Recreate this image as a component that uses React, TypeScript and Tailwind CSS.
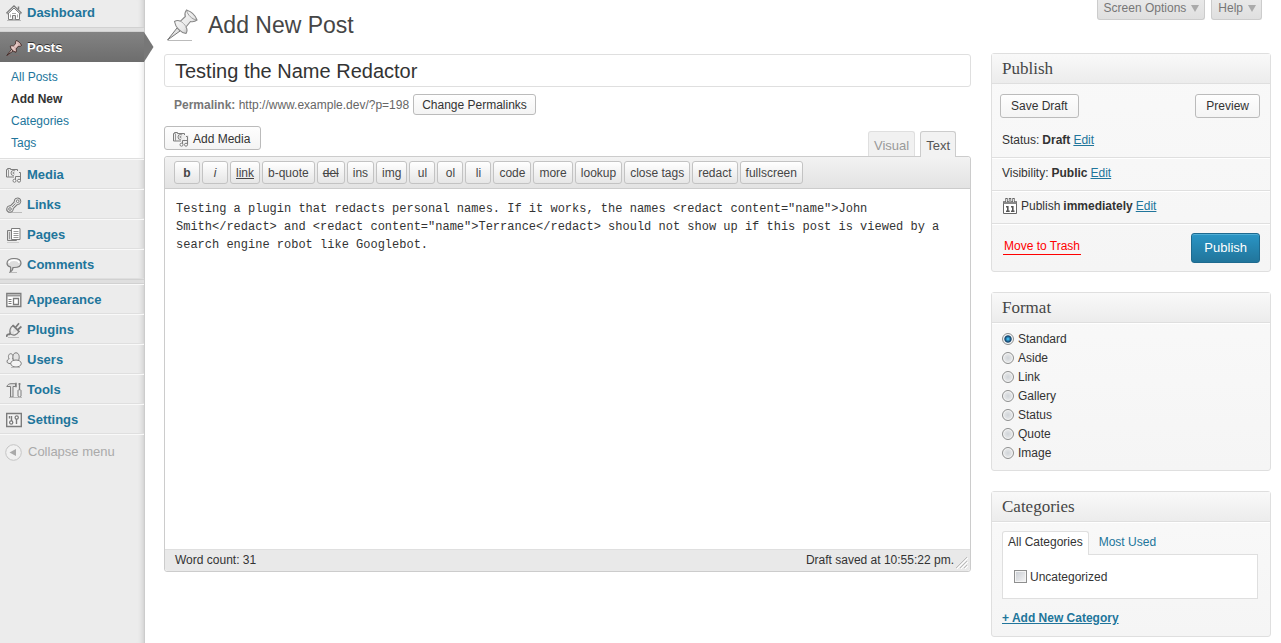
import type { ReactNode } from "react";

function Icon({ children, size = 16 }: { children: ReactNode; size?: number }) {
  return (
    <svg width={size} height={size} viewBox="0 0 16 16" fill="none" stroke="#7c7c7c" strokeWidth="1" className="shrink-0">
      {children}
    </svg>
  );
}

function HomeIcon() {
  return (
    <Icon>
      <path d="M2.5 8v6.5h11V8L8 3Z" fill="#fff" />
      <path d="M.7 8.6 8 1.6l7.3 7" stroke="#777" strokeWidth="2.2" />
      <path d="M1.4 8.3 8 2l6.600 6.300" stroke="#eee" strokeWidth=".8" />
      <path d="M12.5 4.500V1.500" strokeWidth="1.500" />
      <path d="M6.5 14.500V10.500h3v4" fill="#ddd" />
      <path d="M4.500 9.500v3M11.500 9.500v3M6 8.500h4" stroke="#aaa" />
      <path d="M1 15.500h14" stroke="#bbb" />
    </Icon>
  );
}

function PinIcon({ size = 16, dark = false }: { size?: number; dark?: boolean }) {
  return (
    <svg width={size} height={size} viewBox="0 0 32 32" className="shrink-0">
      <defs>
        <linearGradient id={dark ? "pinDark" : "pin"} x1="0" y1="0" x2="1" y2="1">
          <stop offset="0" stopColor={dark ? "#fbe6e2" : "#fff"} />
          <stop offset=".6" stopColor={dark ? "#e0bfbb" : "#e8e8e8"} />
          <stop offset="1" stopColor={dark ? "#8a6a68" : "#999"} />
        </linearGradient>
      </defs>
      <path d="M2 31.500h24" stroke={dark ? "#8a6a68" : "#bbb"} strokeWidth="1" />
      <path d="M1.500 31 11 19l3 3Z" fill={dark ? "#e8d0cc" : "#e4e4e4"} stroke={dark ? "#3c2420" : "#777"} strokeWidth={dark ? "1.800" : "1"} />
      {/* Collar, waist and cap in one outline */}
      <path
        d="M8.500 12.500c2-1.200 4-1.200 6-.3l4.800-4.700c-.8-2.300-.4-4.500 1.200-6.500C25 2.500 29.500 6.500 31 11c-1.800 1.500-4 2-6.500 1.500L20 18c1.300 2 1.200 4.500 0 6.500C14.500 23.500 9.500 18.500 8.500 12.500Z"
        fill={dark ? "url(#pinDark)" : "url(#pin)"}
        stroke={dark ? "#3c2420" : "#888"}
        strokeWidth={dark ? "1.800" : "1.100"}
      />
      <path d="M20.800 2c1 4 5 8 9.500 9" fill="none" stroke={dark ? "#a88" : "#999"} strokeWidth="1" />
      <path d="M14.500 12.200c2 1 4.200 3.300 5.500 5.500" fill="none" stroke={dark ? "#a88" : "#aaa"} strokeWidth="1" />
    </svg>
  );
}

function MediaIcon() {
  return (
    <Icon>
      <path d="M.5 2.500h1v-1h3v1h7V10H.5Z" fill="#eee" />
      <path d="M2.500 2.500V10" stroke="#999" />
      <circle cx="7.500" cy="6" r="2.500" fill="#fff" />
      <circle cx="7.500" cy="6" r=".7" />
      <path d="M9.500 13.500V9.500h1v-4h4v8" stroke="#eee" strokeWidth="3" />
      <path d="M9.500 13.500V9.500h5M13 5.500h1.500v8" />
      <circle cx="8.500" cy="13.700" r="1.500" fill="#fff" />
      <circle cx="13" cy="13.700" r="1.500" fill="#fff" />
    </Icon>
  );
}

function LinkIcon() {
  return (
    <Icon>
      <path d="M4 15.500h12" stroke="#bbb" />
      <path d="M3 13 12.500 3.500" stroke="#777" strokeWidth="5" strokeLinecap="round" />
      <circle cx="11.500" cy="4.300" r="3.300" fill="#e4e4e4" />
      <circle cx="4" cy="12" r="3.300" fill="#e4e4e4" />
      <path d="m4.500 11.500 6.500-6.500" stroke="#e4e4e4" strokeWidth="3" />
      <circle cx="11.700" cy="4.200" r="1.300" fill="#fff" />
      <circle cx="4" cy="12" r="1.300" fill="#fff" />
      <path d="m6 10 3.500-3.500" stroke="#888" />
    </Icon>
  );
}

function PagesIcon() {
  return (
    <Icon>
      <path d="M5.500 3.500h-4v10h9v-1" fill="#ddd" />
      <path d="M3.500 5v7" stroke="#999" />
      <path d="M5.500 1.500h8.500v11H5.500Z" fill="#fff" />
      <path d="M7.500 4.500h5M7.500 6.500h5M7.500 8.500h5M7.500 10.500h5" stroke="#999" />
      <path d="M1 15.500h12" stroke="#ccc" />
    </Icon>
  );
}

function CommentIcon() {
  return (
    <Icon>
      <path d="M3 15.500h8" stroke="#bbb" />
      <path d="M8 1.500c4.500 0 7 2 7 4.700S12 10.500 8 10.500H7c0 1.800-1 3.400-2.700 4.200.7-1.700.7-3.200.2-4.700C2.300 9.300 1 8 1 6.200 1 3.500 4 1.500 8 1.500Z" fill="#ddd" strokeWidth="1.200" />
      <path d="M3 6c0-1.700 2-2.800 5-2.800S13 4.300 13 6" stroke="#fff" strokeWidth="1.500" />
    </Icon>
  );
}

function AppearanceIcon() {
  return (
    <Icon>
      <path d="M.8 1.500h14v13H.8Z" fill="#fff" strokeWidth="1.400" />
      <path d="M1 3.500h13.500" strokeWidth="2" stroke="#999" />
      <path d="M2.500 7.500h3M2.500 9.500h3M2.500 11.500h3" />
      <path d="M7.500 6.500h5v6h-5Z" strokeWidth="1.300" />
    </Icon>
  );
}

function PluginIcon() {
  return (
    <Icon>
      <path d="M2 15.500h11" stroke="#bbb" />
      <path d="M.8 14.800C.6 13 1.600 12 3 12.500L5 11" strokeWidth="1.800" />
      <path d="M4.500 12C3 9 4 5 7.500 3.500l5.500 6c-2 3.500-5.500 4.500-8.500 2.500Z" fill="#e0e0e0" strokeWidth="1.200" />
      <path d="m6.500 3 7 7M9.500 5.500 13 1.200M11.500 8 15.400 4.500" strokeWidth="1.700" />
      <path d="M6 9.500c0-1.300.5-2.500 1.500-3.500M8 11c1 0 2-.5 3-1.500" stroke="#fff" />
    </Icon>
  );
}

function UsersIcon() {
  return (
    <Icon>
      <path d="M1.200 10.500C.5 8.500 2 7 3.200 7 1.700 5 2.500 1.700 4.700 1.700S8 5 6.500 7c1.500.5 2.500 2 2 4.500H3Z" fill="#eee" />
      <path d="M7.500 8.500C6.300 5 7 .8 10 .8s4 4.200 2.500 7.700Z" fill="#e4e4e4" />
      <ellipse cx="10" cy="11.500" rx="5.300" ry="3.500" fill="#f4f4f4" />
      <path d="M5 15.500h9" stroke="#bbb" />
    </Icon>
  );
}

function ToolsIcon() {
  return (
    <Icon>
      <path d="M.8 4.500C1.500 2.500 3.500 1.700 5 1.700h4.500v2.800H7v10.500H4.500V4.500Z" fill="#e0e0e0" />
      <path d="M10 .8v4.500" strokeWidth="1.500" />
      <path d="M13.500 1v7M12.500 2h2" strokeWidth="1.300" />
      <path d="M12 8.500c0-1 3-1 3 0v5.500c0 1.300-3 1.300-3 0Z" fill="#eee" />
      <path d="M3 15.500h13" stroke="#bbb" />
    </Icon>
  );
}

function SettingsIcon() {
  return (
    <Icon>
      <path d="M.7 1.500h14.600v13H.7Z" fill="#f5f5f5" strokeWidth="1.400" />
      <path d="M5.500 4v5M3.500 4v2.500M10.500 7v5" strokeWidth="1.400" />
      <circle cx="5.200" cy="10.500" r="1.600" fill="#fff" strokeWidth="1.300" />
      <circle cx="10.700" cy="5.500" r="1.600" fill="#fff" strokeWidth="1.300" />
    </Icon>
  );
}

function CalendarIcon() {
  return (
    <Icon>
      <path d="M1.500 3.500h13v12h-13Z" fill="#fff" stroke="#666" />
      <path d="M1.500 4.500h13" stroke="#888" strokeWidth="3" />
      <path d="M4.500 0v4M8 0v4M11.500 0v4" stroke="#666" strokeWidth="2.400" />
      <path d="M4.500 1v3M8 1v3M11.500 1v3" stroke="#eee" strokeWidth=".9" />
      <path d="M4 8.700h1.800V13M4 13.200h3.700M9 8.700h1.800V13M9 13.200h3.500" stroke="#555" strokeWidth="1.600" />
    </Icon>
  );
}

function MenuItem({ icon, children }: { icon: ReactNode; children: ReactNode }) {
  return (
    <a href="#" className="flex h-[30px] items-center gap-[5px] border-t border-b border-t-[#f9f9f9] border-b-[#dfdfdf] pt-px pl-[6px] text-[13px] font-bold text-[#21759b]">
      {icon}
      {children}
    </a>
  );
}

function Separator() {
  return <div className="h-[5px] border-t border-b border-[#d1d1d1] bg-[#dfdfdf]"></div>;
}

function Sidebar() {
  const sub = ["All Posts", "Add New", "Categories", "Tags"];
  return (
    <nav className="w-[145px] shrink-0 border-r border-[#ccc] bg-[#ececec] shadow-[inset_-6px_0_6px_-6px_rgba(0,0,0,0.2)]">
      <a href="#" className="flex h-[27px] items-center gap-[5px] pb-[2px] pl-[6px] text-[13px] font-bold text-[#21759b]">
        <HomeIcon />
        Dashboard
      </a>
      <Separator />

      <a href="#" className="relative flex h-[30px] items-center gap-[5px] bg-linear-to-b from-[#838383] to-[#6d6d6d] pt-px pl-[6px] text-[13px] font-bold text-white [text-shadow:0_-1px_0_#333]">
        <PinIcon dark />
        Posts
        {/* Arrow of the current section */}
        <svg width="10" height="30" viewBox="0 0 10 30" className="absolute top-0 left-full">
          <path d="M0 0 9.500 15 0 30Z" fill="#777" />
        </svg>
      </a>
      <ul className="border-b border-[#dfdfdf] bg-white py-1 text-xs shadow-[inset_-6px_0_6px_-6px_rgba(0,0,0,0.15)]">
        {sub.map((label) => (
          <li key={label}>
            <a href="#" className={label === "Add New" ? "block pl-[11px] leading-[22px] font-bold text-[#333]" : "block pl-[11px] leading-[22px] text-[#21759b]"}>
              {label}
            </a>
          </li>
        ))}
      </ul>

      <MenuItem icon={<MediaIcon />}>Media</MenuItem>
      <MenuItem icon={<LinkIcon />}>Links</MenuItem>
      <MenuItem icon={<PagesIcon />}>Pages</MenuItem>
      <MenuItem icon={<CommentIcon />}>Comments</MenuItem>
      <Separator />
      <MenuItem icon={<AppearanceIcon />}>Appearance</MenuItem>
      <MenuItem icon={<PluginIcon />}>Plugins</MenuItem>
      <MenuItem icon={<UsersIcon />}>Users</MenuItem>
      <MenuItem icon={<ToolsIcon />}>Tools</MenuItem>
      <MenuItem icon={<SettingsIcon />}>Settings</MenuItem>

      <button className="flex h-[35px] w-full items-center gap-[6px] border-t border-[#f9f9f9] pl-[5px] text-[13px] text-[#aaa]">
        <svg width="17" height="17" viewBox="0 0 17 17">
          <circle cx="8.500" cy="8.500" r="7.800" fill="#f1f1f1" stroke="#c4c4c4" />
          <path d="M11 5v7L4.500 8.500Z" fill="#aaa" />
        </svg>
        Collapse menu
      </button>
    </nav>
  );
}

function Button({ children, className = "" }: { children: ReactNode; className?: string }) {
  return (
    <button className={`flex items-center rounded-[3px] border border-[#bbb] bg-linear-to-b from-[#fefefe] to-[#f4f4f4] text-xs text-[#333] ${className}`}>
      {children}
    </button>
  );
}

function MetaButton({ children }: { children: ReactNode }) {
  return (
    <button className="flex h-5 items-start gap-[5px] rounded-b-[3px] border border-t-0 border-[#ccc] bg-linear-to-b from-[#e9e9e9] to-[#dfdfdf] pr-[5px] pl-[6px] text-xs leading-[16px] text-[#777]">
      {children}
      <svg width="8" height="16" viewBox="0 0 8 16">
        <path d="M0 5h8l-4 7Z" fill="#aaa" />
      </svg>
    </button>
  );
}

function Toolbar() {
  const tags = ["b", "i", "link", "b-quote", "del", "ins", "img", "ul", "ol", "li", "code", "more", "lookup", "close tags", "redact", "fullscreen"];
  const styles: Record<string, string> = {
    b: "font-bold",
    i: "italic",
    link: "underline",
    del: "line-through",
  };
  return (
    <div className="flex flex-wrap gap-[2px] rounded-t-[3px] border-b border-[#ccc] bg-linear-to-b from-[#f2f2f2] to-[#e3e3e3] py-1 pl-[9px]">
      {tags.map((tag) => (
        <button
          key={tag}
          className={`h-[23px] min-w-[26px] rounded-[3px] border border-[#c3c3c3] bg-linear-to-b from-white to-[#e6e6e6] px-[5px] text-xs text-[#464646] ${styles[tag] ?? ""}`}
        >
          {tag}
        </button>
      ))}
    </div>
  );
}

function Editor() {
  return (
    <section>
      <input
        aria-label="Title"
        defaultValue="Testing the Name Redactor"
        className="mt-px block h-[33px] w-full rounded-[3px] border border-[#dfdfdf] bg-white px-[10px] pt-px text-[20px] text-[#333] outline-none"
      />
      <div className="mt-[7px] flex items-center gap-1 pl-[10px] text-xs text-[#666]">
        <span>
          <strong className="text-[#777]">Permalink:</strong> http://www.example.dev/?p=198
        </span>
        <Button className="h-[21px] px-2">Change Permalinks</Button>
      </div>

      <div className="mt-[11px] flex h-[30px] items-start justify-between">
        <Button className="h-6 gap-1 pt-px pr-[10px] pl-2">
          <MediaIcon />
          Add Media
        </Button>
        <div className="relative mt-[5px] mr-[15px] flex gap-[5px] text-[13px]">
          <button className="h-[25px] rounded-t-[3px] border border-b-0 border-[#dfdfdf] bg-[#f1f1f1] px-[5px] pt-[3px] text-[#999]">Visual</button>
          <button className="h-[26px] rounded-t-[3px] border border-b-0 border-[#ccc] bg-[#f2f2f2] px-[5px] pt-[2px] text-[#555]">Text</button>
        </div>
      </div>

      <div className="rounded-[3px] border border-[#ccc]">
        <Toolbar />
        <textarea
          aria-label="Post content"
          spellCheck={false}
          className="block h-[360px] w-full resize-none bg-white pt-[11px] pr-[25px] pb-[10px] pl-[11px] font-['Liberation_Mono',monospace] text-xs leading-[18px] text-[#333] outline-none"
          defaultValue={
            'Testing a plugin that redacts personal names. If it works, the names <redact content="name">John Smith</redact> and <redact content="name">Terrance</redact> should not show up if this post is viewed by a search engine robot like Googlebot.'
          }
        />
        <div className="flex h-[22px] items-center rounded-b-[3px] border-t border-[#dfdfdf] bg-[#e9e9e9] pb-px pl-[10px] text-xs text-[#333]">
          <span className="flex-1">Word count: 31</span>
          <span>Draft saved at 10:55:22 pm.</span>
          <svg width="14" height="14" viewBox="0 0 14 14" stroke="#bbb" className="mx-px self-end">
            <path d="M1 12 12 1M5 12l7-7M9 12l3-3" />
            <path d="M2 13 13 2M6 13l7-7M10 13l3-3" stroke="#fff" />
          </svg>
        </div>
      </div>
    </section>
  );
}

function Box({ title, children }: { title: string; children: ReactNode }) {
  return (
    <section className="rounded-[3px] border border-[#dfdfdf] bg-linear-to-b from-[#f9f9f9] to-[#f5f5f5]">
      <h3 className="h-[30px] border-b border-[#dfdfdf] bg-linear-to-b from-[#f9f9f9] to-[#ececec] pl-[10px] font-['Liberation_Serif',serif] text-[17px] leading-[29px] text-[#464646]">
        {title}
      </h3>
      {children}
    </section>
  );
}

function EditLink() {
  return (
    <a href="#" className="text-[#21759b] underline">
      Edit
    </a>
  );
}

function PublishBox() {
  return (
    <Box title="Publish">
      <div className="flex justify-between pt-[10px] pr-[10px] pl-2">
        <Button className="h-6 px-[10px]">Save Draft</Button>
        <Button className="h-6 px-[10px]">Preview</Button>
      </div>
      <p className="flex h-10 items-end gap-[3px] border-b border-[#dfdfdf] pb-[9px] pl-[10px]">
        Status: <strong>Draft</strong> <EditLink />
      </p>
      <p className="flex h-[33px] items-center gap-[3px] border-t border-b border-t-white border-b-[#dfdfdf] pb-[3px] pl-[10px]">
        Visibility: <strong>Public</strong> <EditLink />
      </p>
      <p className="flex h-[33px] items-center gap-[3px] border-t border-b border-t-white border-b-[#dfdfdf] pb-[3px] pl-[10px]">
        <CalendarIcon /> Publish <strong>immediately</strong> <EditLink />
      </p>
      <div className="flex h-[47px] items-start justify-between border-t border-white pt-2 pr-[10px] pl-[11px]">
        <a href="#" className="mt-[5px] border-b border-[red] px-px text-[red]">
          Move to Trash
        </a>
        <button className="h-[30px] rounded-[3px] border border-[#1e6a8f] bg-linear-to-b from-[#2a95c5] to-[#21759b] px-3 text-[13px] text-white shadow-[inset_0_1px_0_rgba(120,200,230,0.5)]">
          Publish
        </button>
      </div>
    </Box>
  );
}

function FormatBox() {
  const formats = ["Standard", "Aside", "Link", "Gallery", "Status", "Quote", "Image"];
  return (
    <Box title="Format">
      <div className="border-t border-white px-[10px] pt-[5px] pb-[8px]">
        {formats.map((format) => (
          <label key={format} className="flex h-[19px] items-center gap-1">
            <input
              type="radio"
              name="format"
              defaultChecked={format === "Standard"}
              className="size-3 appearance-none rounded-full border border-[#8e8f8f] bg-radial from-[#d0d4d8] to-[#f4f4f4] shadow-[inset_0_0_0_1px_#f4f4f4] checked:bg-radial checked:from-[#3fb4e8] checked:from-10% checked:via-[#123f66] checked:via-45% checked:to-[#e8f0f4] checked:to-60%"
            />
            {format}
          </label>
        ))}
      </div>
    </Box>
  );
}

function CategoriesBox() {
  return (
    <Box title="Categories">
      <div className="border-t border-white pt-2 pr-3 pb-[9px] pl-[10px]">
        <div className="relative flex">
          <button className="-mb-px h-6 rounded-t-[3px] border border-b-0 border-[#dfdfdf] bg-white px-[5px] pb-[3px]">All Categories</button>
          <button className="h-[23px] px-[10px] pb-px text-[#21759b]">Most Used</button>
        </div>
        <div className="border border-[#dfdfdf] bg-white px-[11px] py-[12px]">
          <label className="flex h-[19px] items-center gap-[3px]">
            <input type="checkbox" className="size-[13px] appearance-none border border-[#8e8f8f] bg-linear-to-br from-[#c8ccd2] to-[#f6f6f6] shadow-[inset_0_0_0_1px_#f4f4f4]" />
            Uncategorized
          </label>
        </div>
        <a href="#" className="mt-[10px] inline-block leading-[18px] font-bold text-[#21759b] underline">
          + Add New Category
        </a>
      </div>
    </Box>
  );
}

export default function App() {
  return (
    <div className="flex min-h-screen bg-white font-['Liberation_Sans',Arial,sans-serif] text-xs text-[#333]">
      <Sidebar />
      <main className="min-w-0 flex-1 pr-[10px] pl-[19px]">
        <header className="flex h-[53px] items-start">
          <div className="flex flex-1 items-center gap-[10px] pt-2 pl-[2px]">
            <PinIcon size={32} />
            <h1 className="text-[23px] leading-[34px] text-[#464646]">Add New Post</h1>
          </div>
          <div className="flex gap-[6px] pr-[9px]">
            <MetaButton>Screen Options</MetaButton>
            <MetaButton>Help</MetaButton>
          </div>
        </header>
        <div className="grid grid-cols-[minmax(0,1fr)_280px] items-start gap-5">
          <Editor />
          <aside className="flex flex-col gap-5">
            <PublishBox />
            <FormatBox />
            <CategoriesBox />
          </aside>
        </div>
      </main>
    </div>
  );
}
